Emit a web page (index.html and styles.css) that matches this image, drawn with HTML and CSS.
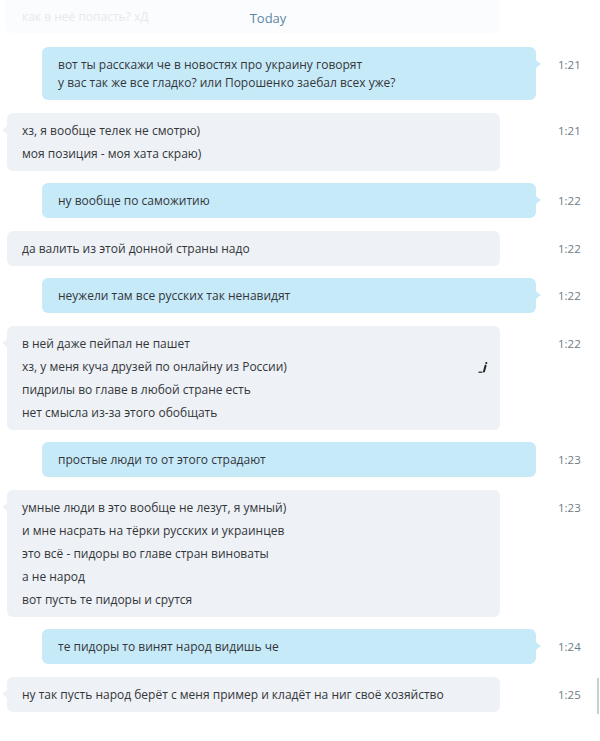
FILE: index.html
```html
<!DOCTYPE html>
<html lang="ru">
<head>
<meta charset="utf-8">
<title>Chat</title>
<link rel="stylesheet" href="styles.css">
</head>
<body>
<div class="chat">
  <div class="history">
    <div class="faded-bubble">как в неё попасть? хД</div>
    <div class="day">Today</div>
  </div>

  <div class="row">
    <div class="bubble out">
      <svg class="tail" viewBox="0 0 6 14" width="6" height="14"><path d="M0,0 C1,4 3,5 5,6.3 Q6.2,7 5,7.7 C3,9 1,10 0,14 Z"/></svg>
      <p>вот ты расскажи че в новостях про украину говорят<br>у вас так же все гладко? или Порошенко заебал всех уже?</p>
    </div>
    <span class="time">1:21</span>
  </div>

  <div class="row">
    <div class="bubble in">
      <svg class="tail" viewBox="0 0 6 14" width="6" height="14"><path d="M6,0 C5,4 3,5 1,6.3 Q-0.2,7 1,7.7 C3,9 5,10 6,14 Z"/></svg>
      <p>хз, я вообще телек не смотрю)</p>
      <p>моя позиция - моя хата скраю)</p>
    </div>
    <span class="time">1:21</span>
  </div>

  <div class="row">
    <div class="bubble out">
      <svg class="tail" viewBox="0 0 6 14" width="6" height="14"><path d="M0,0 C1,4 3,5 5,6.3 Q6.2,7 5,7.7 C3,9 1,10 0,14 Z"/></svg>
      <p>ну вообще по саможитию</p>
    </div>
    <span class="time">1:22</span>
  </div>

  <div class="row">
    <div class="bubble in">
      <p>да валить из этой донной страны надо</p>
    </div>
    <span class="time">1:22</span>
  </div>

  <div class="row">
    <div class="bubble out">
      <svg class="tail" viewBox="0 0 6 14" width="6" height="14"><path d="M0,0 C1,4 3,5 5,6.3 Q6.2,7 5,7.7 C3,9 1,10 0,14 Z"/></svg>
      <p>неужели там все русских так ненавидят</p>
    </div>
    <span class="time">1:22</span>
  </div>

  <div class="row">
    <div class="bubble in">
      <svg class="tail" viewBox="0 0 6 14" width="6" height="14"><path d="M6,0 C5,4 3,5 1,6.3 Q-0.2,7 1,7.7 C3,9 5,10 6,14 Z"/></svg>
      <p>в ней даже пейпал не пашет</p>
      <p class="edited">хз, у меня куча друзей по онлайну из России)
        <svg class="edit-icon" viewBox="0 0 10 12" width="10" height="12"><path d="M0.5,11.2 H4.5" stroke="#222" stroke-width="1.2" fill="none"/><path d="M6,10.5 L7.6,4.6" stroke="#222" stroke-width="2" stroke-linecap="round" fill="none"/><circle cx="8.3" cy="2" r="1.1" fill="#222"/></svg>
      </p>
      <p>пидрилы во главе в любой стране есть</p>
      <p>нет смысла из-за этого обобщать</p>
    </div>
    <span class="time">1:22</span>
  </div>

  <div class="row">
    <div class="bubble out">
      <p>простые люди то от этого страдают</p>
    </div>
    <span class="time">1:23</span>
  </div>

  <div class="row">
    <div class="bubble in">
      <svg class="tail" viewBox="0 0 6 14" width="6" height="14"><path d="M6,0 C5,4 3,5 1,6.3 Q-0.2,7 1,7.7 C3,9 5,10 6,14 Z"/></svg>
      <p>умные люди в это вообще не лезут, я умный)</p>
      <p>и мне насрать на тёрки русских и украинцев</p>
      <p>это всё - пидоры во главе стран виноваты</p>
      <p>а не народ</p>
      <p>вот пусть те пидоры и срутся</p>
    </div>
    <span class="time">1:23</span>
  </div>

  <div class="row">
    <div class="bubble out">
      <svg class="tail" viewBox="0 0 6 14" width="6" height="14"><path d="M0,0 C1,4 3,5 5,6.3 Q6.2,7 5,7.7 C3,9 1,10 0,14 Z"/></svg>
      <p>те пидоры то винят народ видишь че</p>
    </div>
    <span class="time">1:24</span>
  </div>

  <div class="row last">
    <div class="bubble in">
      <svg class="tail" viewBox="0 0 6 14" width="6" height="14"><path d="M6,0 C5,4 3,5 1,6.3 Q-0.2,7 1,7.7 C3,9 5,10 6,14 Z"/></svg>
      <p>ну так пусть народ берёт с меня пример и кладёт на ниг своё хозяйство</p>
    </div>
    <span class="time">1:25</span>
    <span class="scroll-mark"></span>
  </div>
</div>
</body>
</html>
```

FILE: styles.css
```css
* { box-sizing: border-box; }

html, body {
  margin: 0;
  padding: 0;
  background: #ffffff;
}

body {
  font-family: "Open Sans", "Noto Sans", "DejaVu Sans", sans-serif;
  font-size: 12px;
  color: #333639;
}

.chat {
  display: flex;
  flex-direction: column;
  gap: 12.5px;
  width: 600px;
  height: 741px;
  overflow: hidden;
}

.history {
  display: grid;
  width: 536px;
  margin-bottom: 1.5px;
}

.faded-bubble,
.day {
  grid-area: 1 / 1;
}

.faded-bubble {
  margin-left: 5px;
  width: 495px;
  height: 33px;
  padding: 8px 0 0 17px;
  line-height: 18px;
  background: #fbfcfd;
  border-radius: 0 0 6px 6px;
  color: #e6eaee;
}

.day {
  align-self: start;
  justify-self: center;
  padding-top: 9px;
  line-height: 18px;
  font-size: 13px;
  color: #5b87a6;
}

.row {
  position: relative;
  display: grid;
  grid-template-columns: 558px 1fr;
  align-items: start;
}

.bubble {
  position: relative;
  padding: 9px 16px 8px 16px;
  border-radius: 6px;
}

.bubble p {
  margin: 0;
  line-height: 18px;
}

.bubble p + p {
  margin-top: 5px;
}

.bubble.out {
  margin-left: 42px;
  margin-right: 22px;
  background: #c7eaf9;
}

.bubble.in {
  margin-left: 7px;
  margin-right: 58px;
  padding-left: 15px;
  padding-right: 12px;
  background: #eef1f6;
}

.tail {
  position: absolute;
  top: 10px;
}

.bubble.out .tail {
  right: -5px;
  fill: #c7eaf9;
}

.bubble.in .tail {
  left: -5px;
  fill: #eef1f6;
}

.bubble p.edited {
  display: flex;
  justify-content: space-between;
  align-items: center;
}

.edit-icon {
  display: block;
}

.time {
  padding-top: 9px;
  line-height: 18px;
  font-size: 11.5px;
  color: #6e7a85;
}

.scroll-mark {
  position: absolute;
  right: 1px;
  top: 1px;
  width: 2px;
  height: 36px;
  background: #c9ced3;
}
```
